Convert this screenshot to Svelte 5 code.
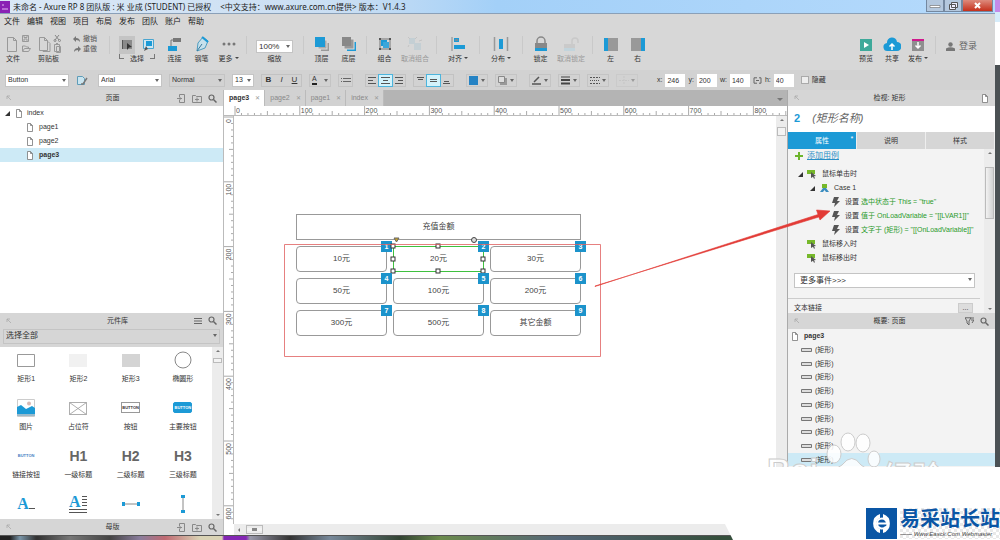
<script>
  const menus = ['文件', '编辑', '视图', '项目', '布局', '发布', '团队', '账户', '帮助']

  // one entry per tool, 'sep' draws the thin divider
  const tools = [
    { icon: 'front', label: '顶层' },
    { icon: 'back', label: '底层' },
    'sep',
    { icon: 'group', label: '组合' },
    { icon: 'ungroup', label: '取消组合', off: true },
    'sep',
    { icon: 'align', label: '对齐', wide: true, more: true },
    'sep',
    { icon: 'distribute', label: '分布', wide: true, more: true },
    'sep',
    { icon: 'lock', label: '锁定' },
    { icon: 'unlock', label: '取消锁定', off: true },
    'sep',
    { icon: 'left', label: '左' },
    { icon: 'right', label: '右' }
  ]

  const publishTools = [
    { icon: 'preview', label: '预览' },
    { icon: 'share', label: '共享' },
    { icon: 'publish', label: '发布', more: true }
  ]

  let openTabs = ['page3', 'page2', 'page1', 'index']
  let currentPage = 'page3'

  const widgets = [
    ['rect1', '矩形1'], ['rect2', '矩形2'], ['rect3', '矩形3'], ['ellipse', '椭圆形'],
    ['image', '图片'], ['placeholder', '占位符'], ['button', '按钮'], ['primary', '主要按钮'],
    ['linkbutton', '链接按钮'], ['H1', '一级标题'], ['H2', '二级标题'], ['H3', '三级标题'],
    ['label', ''], ['paragraph', ''], ['hline', ''], ['vline', '']
  ]

  const amounts = ['10元', '20元', '30元', '50元', '100元', '200元', '300元', '500元', '其它金额']
  const selected = 1

  const shapes = amounts.map((text, i) => {
    return { text, num: i + 1, x: 62 + (i % 3) * 97, y: 130 + Math.floor(i / 3) * 32 }
  })

  const handles = [[0, 0], [45, 0], [90, 0], [0, 13], [90, 13], [0, 25], [45, 25], [90, 25]]

  const actions = [
    ['选中状态于', 'This = "true"'],
    ['值于', 'OnLoadVariable = "[[LVAR1]]"'],
    ['文字于', '(矩形) = "[[OnLoadVariable]]"']
  ]

  const outline = Array(10).fill('(矩形)')
  const outlineSelected = 8

  // ruler ticks, every 10 units of the canvas
  const unit = 6.48
  const hticks = Array.from({ length: 86 }, (_, i) => i)
  const vticks = Array.from({ length: 63 }, (_, i) => i)

  let zoom = '100%'
  let hidden = false
  let dims = { x: '246', y: '200', w: '140', h: '40' }
</script>

{#snippet toolIcon(name)}
  <svg class="tool-icon" width="18" height="16" viewBox="0 0 18 16">
    {#if name === 'front'}
      <rect x="8" y="7" width="8" height="8" fill="#999" />
      <rect x="5" y="4" width="9" height="9" fill="#aaa" stroke="#ddd" />
      <rect x="2" y="1" width="10" height="10" fill="#1c9ad6" />
    {:else if name === 'back'}
      <rect x="7" y="6" width="9" height="9" fill="#1c9ad6" />
      <rect x="4" y="3" width="10" height="10" fill="#999" stroke="#ddd" />
      <rect x="2" y="1" width="9" height="9" fill="#888" />
    {:else if name === 'group'}
      <rect x="4" y="3" width="10" height="10" fill="none" stroke="#777" />
      <rect x="5" y="4" width="6" height="6" fill="#1c9ad6" />
      <rect x="7" y="6" width="6" height="6" fill="#3ba6da" />
      <path d="M3 2h2v2H3zM13 2h2v2h-2zM3 12h2v2H3zM13 12h2v2h-2z" fill="#555" />
    {:else if name === 'ungroup'}
      <path d="M3 2h6v6H3zM8 7h7v7H8z" fill="#c4cfd4" />
      <path d="M2 1l2 2M9 3l2-2M3 9l-1 2M13 5l3-1" stroke="#c4c4c4" />
    {:else if name === 'align'}
      <path d="M3 1v14" stroke="#888" />
      <path d="M5 2h5v4H5zM5 9h11v4H5z" fill="#1c9ad6" />
      <path d="M6 3h3v2H6z" fill="#6c8ea0" />
    {:else if name === 'distribute'}
      <path d="M2.500 1v14M15.500 1v14" stroke="#999" stroke-width="1.500" />
      <path d="M7 3h4v10H7z" fill="#1c9ad6" />
    {:else if name === 'lock'}
      <path d="M5 8V5a4 4 0 0 1 8 0v3" fill="none" stroke="#888" stroke-width="1.500" />
      <path d="M3 7h12v5H3z" fill="#888" />
      <path d="M3 12h12v3H3z" fill="#1c9ad6" />
    {:else if name === 'unlock'}
      <path d="M10 8V5a3 3 0 0 1 6 0v2" fill="none" stroke="#c9c9c9" stroke-width="1.500" />
      <path d="M2 8h11v4H2z" fill="#cacaca" />
      <path d="M2 12h11v3H2z" fill="#c2d4dc" />
    {:else if name === 'left'}
      <path d="M6 2h10v13H6z" fill="#999" />
      <path d="M2 2h4v13H2z" fill="#1c9ad6" />
    {:else if name === 'right'}
      <path d="M2 2h10v13H2z" fill="#999" />
      <path d="M12 2h4v13h-4z" fill="#1c9ad6" />
    {:else if name === 'connect'}
      <path d="M7 2h8v4H7z" fill="#777" />
      <path d="M5 10V4h3" fill="none" stroke="#777" />
      <path d="M2 10h9v5H2z" fill="#1c9ad6" />
    {:else if name === 'pen'}
      <path d="M10 1l5 4-3 7-8 3 1-8z" fill="#c7e1ec" stroke="#4d9cc0" />
      <path d="M4 15l5-7" stroke="#39789a" />
      <path d="M9 1l6 5" stroke="#1c9ad6" stroke-width="2" />
    {:else if name === 'more'}
      <circle cx="4" cy="8" r="1.500" fill="#777" /><circle cx="9" cy="8" r="1.500" fill="#777" /><circle cx="14" cy="8" r="1.500" fill="#777" />
    {:else if name === 'preview'}
      <path d="M3 3h12v12H3z" fill="#3ea99a" />
      <path d="M7 6l5 3-5 3z" fill="#fff" />
    {:else if name === 'share'}
      <path d="M5 15a4 4 0 0 1-1-8 5 5 0 0 1 10-1 4.500 4.500 0 0 1 0 9z" fill="#1c9ad6" />
      <path d="M9 14V9M6.500 10.500L9 8l2.500 2.500" fill="none" stroke="#fff" stroke-width="1.500" />
    {:else if name === 'publish'}
      <path d="M3 5h12v10H3z" fill="#8f8f8f" />
      <path d="M3 3h12v2H3z" fill="#d0188c" />
      <path d="M9 6v5M6.500 9.500L9 12l2.500-2.500" fill="none" stroke="#fff" stroke-width="1.500" />
    {/if}
  </svg>
{/snippet}

{#snippet tool(t)}
  <button class="tool" class:off={t.off} class:wide={t.wide || t.off}>
    {@render toolIcon(t.icon)}
    <span>{t.label}{#if t.more}<i class="caret"></i>{/if}</span>
  </button>
{/snippet}

{#snippet doc()}
  <svg class="doc" width="8" height="9" viewBox="0 0 8 9"><path d="M1.500.5h3l2 2v6h-5zM4.500.5v2h2" fill="#fff" stroke="#777" stroke-width=".8" /></svg>
{/snippet}

{#snippet magnifier()}
  <svg width="9" height="9" viewBox="0 0 9 9"><circle cx="3.500" cy="3.500" r="2.500" fill="none" stroke="#666" stroke-width="1.200" /><path d="M5.500 5.500L8.500 8.500" stroke="#666" stroke-width="1.500" /></svg>
{/snippet}

{#snippet addIcons()}
  <svg width="9" height="9" viewBox="0 0 9 9"><path d="M2.500 3V.5h5v8h-5V6M0 4.500h5M3 3v3" fill="none" stroke="#888" /></svg>
  <svg width="10" height="9" viewBox="0 0 10 9"><path d="M.5 8.500v-7h3l1 1h5v6zM3 5.500h4M5 3.500v4" fill="none" stroke="#888" /></svg>
{/snippet}

{#snippet pin()}
  <svg class="pin" width="6" height="6" viewBox="0 0 6 6"><path d="M1 4V1h3M1 1l4 4" fill="none" stroke="#aaa" stroke-width=".8" /></svg>
{/snippet}

{#snippet eventIcon()}
  <svg class="event-icon" width="10" height="9" viewBox="0 0 10 9"><path d="M0 0h8v4H0z" fill="#76b82a" /><path d="M4 2l5 4-2 .3 1 2-1 .5-1-2-2 1.200z" fill="#555" /></svg>
{/snippet}

<svelte:head><title>Axure RP 8</title></svelte:head>

<div class="desktop">
  <div class="window">
    <header class="titlebar">
      <svg width="10" height="12" viewBox="0 0 10 12"><path d="M0 0h10v12H0z" fill="#8a22b4" /><path d="M2 8h6M2 4h2" stroke="#e5b9f5" /></svg>
      <span>未命名 - Axure RP 8 团队版 : 米 业成 (STUDENT) 已授权</span>
      <span class="support">&lt;中文支持：www.axure.com.cn提供&gt; 版本：V1.4.3</span>
      <div class="controls">
        <button aria-label="最小化"><svg width="12" height="6" viewBox="0 0 12 6"><path d="M1 2.500h10v2H1z" fill="#fff" stroke="#666" stroke-width=".6" /></svg></button>
        <button aria-label="还原"><svg width="9" height="8" viewBox="0 0 9 8"><path d="M2.500.5h6v5h-6zM.5 2.500h6v5h-6z" fill="#eef" stroke="#555" /></svg></button>
        <button class="close" aria-label="关闭"><svg width="7" height="7" viewBox="0 0 7 7"><path d="M1 1l5 5M6 1L1 6" stroke="#fff" stroke-width="2" /></svg></button>
      </div>
    </header>

    <nav class="menubar">
      {#each menus as m}
        <button>{m}</button>
      {/each}
    </nav>

    <div class="toolbar">
      <div class="filegroup">
        <div class="icons">
          <svg width="25" height="20" viewBox="0 0 25 20">
            <path d="M1.500 3.500h6l3 3v11h-9zM7.500 3.500v3h3" fill="none" stroke="#999" />
            <path d="M16.500 1.500h6v6h-6zM18 1.500v2h3v-2M18 7V5h3v2" fill="none" stroke="#999" />
            <path d="M16.500 17v-5h3l1 1h2v2M16.500 17.500l2-3h6l-2 3z" fill="none" stroke="#999" />
          </svg>
        </div>
        <span>文件</span>
      </div>
      <div class="filegroup">
        <div class="icons">
          <svg width="25" height="20" viewBox="0 0 25 20">
            <path d="M1.500 3.500h5l3 3v10h-8zM6.500 3.500v3h3M5 16.500v1h7v-8l-2-2" fill="none" stroke="#999" />
            <path d="M17 1l4 5M21 1l-4 5" stroke="#888" /><circle cx="17" cy="6.500" r="1" fill="none" stroke="#888" /><circle cx="21.500" cy="6.500" r="1" fill="none" stroke="#888" />
            <path d="M16.500 10.500h5v7h-5zM18 9.500h2M18.500 12.500h4v6h-4z" fill="none" stroke="#999" />
          </svg>
        </div>
        <span>剪贴板</span>
      </div>
      <div class="undo">
        <button><svg width="8" height="7" viewBox="0 0 8 7"><path d="M0 3l3-3v2q4 0 4 4-1-2-4-2v2z" fill="#777" /></svg>撤销</button>
        <button><svg width="8" height="7" viewBox="0 0 8 7"><path d="M8 3L5 0v2Q1 2 1 6q1-2 4-2v2z" fill="#777" /></svg>重做</button>
      </div>
      <i class="sep"></i>
      <div class="selectmode">
        <div class="modes">
          <button class="on" aria-label="相交选中"><svg width="16" height="16" viewBox="0 0 16 16"><path d="M3 3h10v9H3z" fill="#8a8a8a" /><path d="M8 6l5 4-3 .5L8 13z" fill="#333" /><path d="M3.500 3v9" stroke="#555" /></svg></button>
          <button aria-label="包含选中"><svg width="14" height="16" viewBox="0 0 14 16"><path d="M2.500 2.500h10v9h-10z" fill="#cfe6f1" stroke="#4aa5cf" /><path d="M5 4h6v5H5z" fill="#1c9ad6" /><path d="M3 14l2-5 2 3z" fill="#555" /></svg></button>
        </div>
        <span class="bracket"><i></i>选择<i></i></span>
      </div>
      {@render tool({ icon: 'connect', label: '连接' })}
      {@render tool({ icon: 'pen', label: '钢笔' })}
      {@render tool({ icon: 'more', label: '更多', more: true })}
      <i class="sep"></i>
      <div class="zoom">
        <div class="combo"><select id="zoom" bind:value={zoom}><option>100%</option><option>200%</option></select></div>
        <label for="zoom">缩放</label>
      </div>
      <i class="sep"></i>
      {#each tools as t}
        {#if t === 'sep'}
          <i class="sep"></i>
        {:else}
          {@render tool(t)}
        {/if}
      {/each}
      <div class="account">
        {#each publishTools as t}
          {@render tool(t)}
        {/each}
        <i class="sep"></i>
        <button class="login"><svg width="9" height="9" viewBox="0 0 9 9"><circle cx="4.500" cy="2.500" r="2.200" fill="#777" /><path d="M0 9V6.500Q4.500 4 9 6.500V9z" fill="#777" /></svg>登录</button>
      </div>
    </div>

    <div class="formatbar">
      <div class="combo style"><select aria-label="样式"><option>Button</option></select></div>
      <button class="flat" aria-label="样式管理"><svg width="12" height="11" viewBox="0 0 12 11"><path d="M1.500 1.500h5l2 2v6h-7z" fill="#c9e4ef" stroke="#5e9cb8" /><path d="M11 3L7 9H5" fill="none" stroke="#777" stroke-width="1.500" /></svg></button>
      <div class="combo style font"><select aria-label="字体"><option>Arial</option></select></div>
      <div class="combo weight"><select aria-label="字型"><option>Normal</option></select></div>
      <div class="combo size"><select aria-label="字号"><option>13</option></select></div>
      <div class="set"><button><b>B</b></button><button><em>I</em></button><button><u>U</u></button></div>
      <button class="drop" aria-label="文字颜色"><span class="letter">A</span></button>
      <button class="box" aria-label="项目符号"><svg width="10" height="8" viewBox="0 0 10 8"><path d="M2 2.500h8M2 5.500h8M0 2.500h1M0 5.500h1" stroke="#666" /></svg></button>
      <div class="set gap">
        <button aria-label="左对齐"><svg width="9" height="9" viewBox="0 0 9 9"><path d="M0 1.500h8M0 4.500h5M0 7.500h8" stroke="#555" /></svg></button>
        <button class="on" aria-label="居中"><svg width="9" height="9" viewBox="0 0 9 9"><path d="M0 1.500h9M2 4.500h5M0 7.500h9" stroke="#555" /></svg></button>
        <button aria-label="右对齐"><svg width="9" height="9" viewBox="0 0 9 9"><path d="M1 1.500h8M4 4.500h5M1 7.500h8" stroke="#555" /></svg></button>
      </div>
      <div class="set">
        <button aria-label="顶部"><svg width="9" height="9" viewBox="0 0 9 9"><path d="M1 1.500h7M2 3.500h5" stroke="#555" /></svg></button>
        <button class="on" aria-label="中部"><svg width="9" height="9" viewBox="0 0 9 9"><path d="M1 3.500h7M1 5.500h7" stroke="#555" /></svg></button>
        <button aria-label="底部"><svg width="9" height="9" viewBox="0 0 9 9"><path d="M2 5.500h5M1 7.500h7" stroke="#555" /></svg></button>
      </div>
      <button class="drop gap" aria-label="填充颜色"><svg width="9" height="9"><path d="M0 0h9v9H0z" fill="#2583c4" /></svg></button>
      <button class="drop" aria-label="外部阴影"><svg width="9" height="9"><path d="M2 2h7v7H2z" fill="#999" /><path d="M.5.5h6v6h-6z" fill="#ddd" stroke="#888" /></svg></button>
      <button class="drop gap" aria-label="线段颜色"><svg width="9" height="9"><path d="M2 6l5-5M0 8h9" stroke="#555" stroke-width="1.500" /></svg></button>
      <button class="drop" aria-label="线宽"><svg width="9" height="9"><path d="M0 1h9" stroke="#444" /><path d="M0 4h9M0 7.500h9" stroke="#444" stroke-width="2" /></svg></button>
      <button class="drop" aria-label="线段类型"><svg width="10" height="9"><path d="M0 1.500h10M0 7.500h10" stroke="#555" stroke-dasharray="2 1" /><path d="M0 4.500h10" stroke="#555" stroke-dasharray="1 1" /></svg></button>
      <button class="drop faded" aria-label="箭头样式"><svg width="10" height="9"><path d="M0 4.500h10M5 0v9" stroke="#bbb" stroke-dasharray="2 1" /></svg></button>
      <div class="dims">
        <label for="dim-x">x:</label><input id="dim-x" bind:value={dims.x} />
        <label for="dim-y">y:</label><input id="dim-y" bind:value={dims.y} />
        <label for="dim-w">w:</label><input id="dim-w" bind:value={dims.w} />
        <svg width="9" height="7" viewBox="0 0 9 7"><path d="M4 .8H1v5.400h3M6 .8h2v5.400H6M3 3.500h3" fill="none" stroke="#666" /></svg>
        <label for="dim-h">h:</label><input id="dim-h" bind:value={dims.h} />
      </div>
      <label class="hide"><input type="checkbox" bind:checked={hidden} />隐藏</label>
    </div>

    <main>
      <aside class="left">
        <div class="head">{@render pin()}<h2>页面</h2><div class="head-icons">{@render addIcons()}{@render magnifier()}</div></div>
        <ul class="pages">
          <li class="root"><i class="tri"></i>{@render doc()}index</li>
          {#each ['page1', 'page2', 'page3'] as p}
            <li class:current={p === currentPage}>{@render doc()}{p}</li>
          {/each}
        </ul>
        <div class="head library-head">{@render pin()}<h2>元件库</h2><div class="head-icons"><svg width="8" height="8" viewBox="0 0 8 8"><path d="M0 1.500h8M0 4h8M0 6.500h8" stroke="#666" /></svg>{@render magnifier()}</div></div>
        <div class="library-pick"><div class="combo"><select aria-label="元件库"><option>选择全部</option></select></div></div>
        <div class="library">
          <div class="widgets">
            {#each widgets as [kind, label]}
              <div class="widget">
                <div class="pic">
                  {#if kind[0] === 'H'}
                    <strong>{kind}</strong>
                  {:else if kind === 'button' || kind === 'primary' || kind === 'linkbutton'}
                    <span class={kind}>BUTTON</span>
                  {:else if kind === 'label'}
                    <span class="serif">A</span><svg width="6" height="16"><path d="M0 12.500h6" stroke="#555" /></svg>
                  {:else}
                    <svg width="20" height="20" viewBox="0 0 20 20">
                      {#if kind === 'rect1'}<path d="M1.500 4.500h17v12h-17z" fill="#fff" stroke="#999" />
                      {:else if kind === 'rect2'}<path d="M1 4h18v13H1z" fill="#f1f1f1" />
                      {:else if kind === 'rect3'}<path d="M1 4h18v13H1z" fill="#d4d4d4" />
                      {:else if kind === 'ellipse'}<circle cx="10" cy="10" r="8" fill="#fff" stroke="#888" />
                      {:else if kind === 'image'}<path d="M1.500 1.500h17v17h-17z" fill="#fff" stroke="#ccc" /><circle cx="13" cy="5.500" r="2" fill="#d9b9b4" /><path d="M1 9l4-2 5 4 6-3 3 2v6H1z" fill="#1c9ad6" /><path d="M1 16h18v2H1z" fill="#9bc" />
                      {:else if kind === 'placeholder'}<path d="M1.500 4.500h17v12h-17zM1.500 4.500l17 12M18.500 4.500l-17 12" fill="none" stroke="#999" stroke-width=".8" />
                      {:else if kind === 'paragraph'}<text x="1" y="13" class="para">A</text><path d="M14 2.500h5M14 5.500h5M14 8.500h5M14 11.500h5M1 15.500h18M1 18.500h18" stroke="#555" />
                      {:else if kind === 'hline'}<path d="M2 10h16" stroke="#888" /><path d="M1 8h3v4H1zM16 8h3v4h-3z" fill="#1c9ad6" />
                      {:else if kind === 'vline'}<path d="M10 2v16" stroke="#888" /><path d="M8 1h4v3H8zM8 16h4v3H8z" fill="#1c9ad6" />
                      {/if}
                    </svg>
                  {/if}
                </div>
                <span>{label}</span>
              </div>
            {/each}
          </div>
          <div class="vscroll"><i class="up"></i><b class="short"></b><i class="down"></i></div>
        </div>
        <div class="head">{@render pin()}<h2>母版</h2><div class="head-icons">{@render addIcons()}{@render magnifier()}</div></div>
      </aside>

      <section class="center">
        <div class="tabs">
          {#each openTabs as t}
            <button class="tab" class:active={t === currentPage} on:click={() => (currentPage = t)}>{t}<span>✕</span></button>
          {/each}
          <i class="tabmenu"></i>
        </div>
        <svg class="hruler">
          {#each hticks as i}
            <path d="M{11 + i * unit} {i % 10 === 0 ? 0 : i % 5 === 0 ? 5 : 7}V10" />
            {#if i % 10 === 0}<text x={12 + i * unit} y="7">{i * 10}</text>{/if}
          {/each}
        </svg>
        <div class="workrow">
          <svg class="vruler">
            {#each vticks as i}
              <path d="M{i % 10 === 0 ? 0 : i % 5 === 0 ? 5 : 7} {1 + i * unit}H10" />
              {#if i % 10 === 0}<text text-anchor="end" transform="translate(7 {3 + i * unit}) rotate(-90)">{i * 10}</text>{/if}
            {/each}
          </svg>
          <div class="canvas">
            <div class="shape banner">充值金额</div>
            {#each shapes as s, i}
              <div class="shape amount" class:picked={i === selected} style="left: {s.x}px; top: {s.y}px">
                {s.text}
                {#if i === selected}
                  <svg class="handles" width="99" height="42" viewBox="-4 -12 99 42">
                    <path d="M1-8h5L3.500-4z" fill="#c9a227" stroke="#666" />
                    <circle cx="81" cy="-6" r="2.500" fill="#ddd" stroke="#444" />
                    {#each handles as [hx, hy]}
                      <rect x={hx - 2} y={hy - 2} width="4" height="4" />
                    {/each}
                  </svg>
                {/if}
                <span class="num">{s.num}</span>
              </div>
            {/each}
          </div>
          <div class="vscroll"><i class="up"></i><b></b></div>
        </div>
        <div class="hscroll"><i></i><b></b></div>
      </section>

      <aside class="right">
        <div class="head">{@render pin()}<h2>检视: 矩形</h2><div class="head-icons">{@render doc()}</div></div>
        <div class="name"><b>2</b><em>(矩形名称)</em></div>
        <div class="inspect-tabs"><button class="on">属性<i>*</i></button><button>说明</button><button>样式</button></div>
        <div class="events">
          <div class="event-body">
            <div class="addcase"><svg width="8" height="8"><path d="M4 0v8M0 4h8" stroke="#6db52c" stroke-width="2" /></svg><a href="#case">添加用例</a></div>
            <ul>
              <li><i class="tri"></i>{@render eventIcon()}鼠标单击时</li>
              <li class="case"><i class="tri"></i><svg width="9" height="9" viewBox="0 0 9 9"><path d="M2 0h5v4H2z" fill="#76b82a" /><path d="M0 8l3-4 3 0 3 4H6L4.500 6 3 8z" fill="#3b8dc0" /></svg>Case 1</li>
              {#each actions as [verb, rest]}
                <li class="action"><svg width="8" height="10" viewBox="0 0 8 10"><path d="M2 0h5L5 4h3L2 10l1-4H0z" fill="#555" /></svg><span>设置</span> <span class="green">{verb} {rest}</span></li>
              {/each}
              <li class="leaf">{@render eventIcon()}鼠标移入时</li>
              <li class="leaf">{@render eventIcon()}鼠标移出时</li>
            </ul>
            <div class="combo moreevents"><select aria-label="更多事件"><option>更多事件&gt;&gt;&gt;</option></select></div>
            <div class="textlink"><span>文本链接</span><button aria-label="编辑文本链接">...</button></div>
          </div>
          <div class="vscroll"><i class="up"></i><b class="long"></b><i class="down"></i></div>
        </div>
        <div class="head">{@render pin()}<h2>概要: 页面</h2><div class="head-icons"><svg width="9" height="8" viewBox="0 0 9 8"><path d="M0 .8h6L4 4v4L2 6V4zM6 1h3M6 3h3L7 6" fill="none" stroke="#666" /></svg>{@render magnifier()}</div></div>
        <ul class="outline">
          <li class="top">{@render doc()}page3</li>
          {#each outline as o, i}
            <li class:current={i === outlineSelected}><svg width="11" height="4" viewBox="0 0 11 4"><path d="M.5.5h10v3H.5z" fill="#ddd" stroke="#777" /></svg>{o}</li>
          {/each}
        </ul>
      </aside>
    </main>
    <footer class="taskbar"></footer>
  </div>
  <div class="edge"></div>

  <!-- marks laid over the window -->
  <svg class="marks" width="1000" height="540" viewBox="0 0 1000 540">
    <path d="M284.500 244.500h316v112h-316z" fill="none" stroke="#e06060" stroke-width=".8" />
    <path d="M595 286.500L818 214.500 816.500 210 830 211 820 220 818.800 217 595 286z" fill="#e23b36" stroke="#e23b36" stroke-width=".6" />
    <g class="paw">
      <text x="767" y="482" font-size="33">Bai</text>
      <text x="883" y="487" font-size="30">经验</text>
      <ellipse cx="834" cy="454" rx="7" ry="9" /><ellipse cx="848" cy="442" rx="7" ry="9" /><ellipse cx="863" cy="443" rx="7" ry="9" /><ellipse cx="874" cy="459" rx="6" ry="8" />
      <path d="M830 478q4-9 12-13 10-13 19 0 9 5 11 13z" />
    </g>
    <path d="M733 540l-8-16V467h275v73z" fill="#fff" />
  </svg>

  <div class="brand">
    <svg width="31" height="31" viewBox="0 0 31 31">
      <path d="M0 0h31v31H0z" fill="#0a56a5" />
      <path d="M14 6a10 10 0 0 0 0 19v-4a6 6 0 0 1 0-11zM17 6a10 10 0 0 1 0 19v-4a6 6 0 0 0 0-11z" fill="#fff" />
      <path d="M10 15.500h11a5 5 0 0 0-10 0 5 5 0 0 0 9 3" fill="none" stroke="#fff" stroke-width="2" />
    </svg>
    <div><strong>易采站长站</strong><small>—— Www.Easck.Com Webmaster</small></div>
  </div>
</div>

<style>
  :global(body) {
    background: #fff;
  }

  .desktop {
    position: relative;
    display: flex;
    height: 100vh;
    overflow: hidden;
    font: 7px/10px "Liberation Sans", "Noto Sans CJK SC", sans-serif;
    color: #333;
  }

  .desktop * {
    box-sizing: border-box;
  }

  button, select, input {
    font: inherit;
    color: inherit;
    margin: 0;
    padding: 0;
    border: 0;
    background: none;
    border-radius: 0;
  }

  ul {
    list-style: none;
    margin: 0;
    padding: 0;
  }

  svg {
    flex: none;
    display: block;
  }

  .window {
    flex: 1;
    min-width: 0;
    display: flex;
    flex-direction: column;
    background: #d7d7d7;
  }

  .edge {
    width: 5px;
    background: linear-gradient(#c48ae8 0 12px, #d6ecfa 12px 22px, #fff 22px 65px, #4b5154 65px);
  }

  .titlebar {
    display: flex;
    align-items: center;
    height: 14px;
    flex: none;
    gap: 3px;
    font-family: "Noto Sans", "Noto Sans CJK SC", sans-serif;
    font-size: 8px;
    color: #222;
    white-space: nowrap;
    background: linear-gradient(90deg, #dbe8f6, #c9def3 35%, #a3d0f8 50%, #b5dafc);
    border-bottom: 1px solid #8aa0b8;
  }

  .support {
    margin-left: 6px;
  }

  .controls {
    margin-left: auto;
    align-self: flex-start;
    display: flex;
    height: 12px;
  }

  .controls button {
    display: grid;
    place-items: center;
    width: 18px;
    background: #b4c8de;
    border: 1px solid #7488a0;
    border-top: 0;
  }

  .controls .close {
    width: 31px;
    margin-right: 2px;
    background: linear-gradient(#dd8a7c, #c5301c);
  }

  .menubar {
    display: flex;
    flex: none;
    height: 15px;
    padding-left: 4px;
    gap: 7px;
    font-size: 8px;
    color: #222;
  }

  .toolbar {
    display: flex;
    flex: none;
    height: 41px;
    padding: 5px 0 0 6px;
  }

  .filegroup {
    width: 32px;
  }

  .filegroup .icons {
    height: 20px;
  }

  .undo {
    display: flex;
    flex-direction: column;
    width: 32px;
    margin-left: 3px;
  }

  .undo button {
    display: flex;
    align-items: center;
    gap: 2px;
    color: #555;
  }

  .sep {
    flex: none;
    width: 1px;
    height: 18px;
    margin: 2px 4px;
    background: #c9c9c9;
  }

  .selectmode {
    width: 42px;
    margin: 0 0 0 5px;
  }

  .modes {
    display: flex;
    gap: 6px;
    height: 20px;
    padding-top: 2px;
  }

  .modes .on {
    background: #c4c4c4;
  }

  .bracket {
    display: flex;
    justify-content: space-between;
    width: 36px;
  }

  .bracket i {
    width: 5px;
    height: 5px;
    border: solid #777;
    border-width: 0 0 1px 1px;
  }

  .bracket i:last-child {
    border-width: 0 1px 1px 0;
  }

  .tool {
    display: flex;
    flex: none;
    flex-direction: column;
    align-items: center;
    width: 27px;
    height: 30px;
    padding-top: 2px;
    white-space: nowrap;
  }

  .tool span {
    margin-top: 2px;
  }

  .tool.wide {
    width: 34px;
  }

  .tool.off {
    color: #999;
  }

  .caret {
    display: inline-block;
    margin: 0 0 2px 2px;
    border: 2px solid transparent;
    border-top-color: #444;
    border-bottom: 0;
  }

  .zoom {
    width: 48px;
    padding: 6px 6px 0 5px;
    text-align: center;
  }

  .zoom .combo {
    font-size: 8px;
    margin-bottom: 1px;
  }

  .zoom label {
    display: block;
  }

  .combo {
    position: relative;
    height: 13px;
    background: #fff;
  }

  .combo::after {
    content: "";
    position: absolute;
    right: 3px;
    top: 5px;
    border: 2px solid transparent;
    border-top: 3px solid #666;
    border-bottom: 0;
    pointer-events: none;
  }

  .combo select {
    appearance: none;
    width: 100%;
    height: 100%;
    padding-left: 2px;
    border: 1px solid #c4c4c4;
  }

  .account {
    display: flex;
    margin-left: auto;
    padding-right: 18px;
  }

  .account .tool {
    width: 26px;
  }

  .login {
    display: flex;
    align-items: center;
    gap: 4px;
    height: 24px;
    margin-left: 6px;
    font-size: 9px;
    color: #666;
  }

  .formatbar {
    display: flex;
    flex: none;
    align-items: center;
    height: 20px;
    padding: 0 5px 0 5px;
    gap: 7px;
    background: #d2d2d2;
  }

  .formatbar .style {
    width: 64px;
  }

  .formatbar .font {
    margin-left: 3px;
  }

  .formatbar .weight {
    width: 56px;
    background: #d2d2d2;
  }

  .formatbar .size {
    width: 22px;
  }

  .set {
    display: flex;
    height: 13px;
    border: 1px solid #c2c2c2;
  }

  .set button {
    display: grid;
    place-items: center;
    width: 13px;
    font-size: 8px;
  }

  .set button.on {
    background: #d3f2fb;
    outline: 1px solid #4db4dc;
  }

  .formatbar .gap {
    margin-left: 5px;
  }

  .drop, .box {
    display: flex;
    align-items: center;
    justify-content: space-between;
    width: 22px;
    height: 13px;
    padding: 0 2px;
    border: 1px solid #c4c4c4;
  }

  .box {
    width: 15px;
  }

  .drop::after {
    content: "";
    border: 2px solid transparent;
    border-top: 3px solid #666;
    border-bottom: 0;
  }

  .faded {
    opacity: .5;
  }

  .letter {
    line-height: 8px;
    border-bottom: 2px solid #222;
  }

  .dims {
    display: flex;
    align-items: center;
    gap: 3px;
    margin-left: 12px;
  }

  .dims input {
    width: 20px;
    height: 13px;
    padding-left: 2px;
    background: #fff;
  }

  .hide {
    display: flex;
    align-items: center;
    gap: 3px;
  }

  .hide input {
    appearance: none;
    width: 8px;
    height: 8px;
    background: #eee;
    border: 1px solid #aaa;
  }

  main {
    display: flex;
    flex: 1;
    min-height: 0;
  }

  .left, .center, .right {
    display: flex;
    flex-direction: column;
    min-height: 0;
    overflow: hidden;
  }

  .left {
    width: 223px;
    flex: none;
  }

  .center {
    flex: 1;
    min-width: 0;
    border-left: 1px solid #bbb;
    background: #fff;
  }

  .right {
    width: 208px;
    flex: none;
    border-left: 1px solid #aaa;
    background: #f3f3f3;
  }

  .head {
    display: flex;
    flex: none;
    align-items: center;
    height: 16px;
    padding: 0 6px;
    background: #d6d6d6;
  }

  h2 {
    flex: 1;
    margin: 0;
    font-size: 7px;
    font-weight: 400;
    text-align: center;
  }

  .left .pin {
    margin-right: 36px;
  }

  .right .pin {
    margin-right: 20px;
  }

  .head-icons {
    display: flex;
    justify-content: flex-end;
    align-items: center;
    gap: 6px;
    min-width: 30px;
  }

  .pages {
    flex: 6;
    background: #fff;
  }

  .pages li {
    display: flex;
    align-items: center;
    gap: 5px;
    height: 14px;
    padding-left: 26px;
  }

  .pages .root {
    padding-left: 5px;
    gap: 4px;
  }

  .tri {
    flex: none;
    width: 0;
    height: 0;
    border-left: 5px solid transparent;
    border-bottom: 5px solid #333;
  }

  .pages .root .doc {
    margin-left: 1px;
  }

  .current {
    background: #cdeaf6;
  }

  .pages .current {
    font-weight: 700;
  }

  .library-pick {
    flex: none;
    height: 18px;
    padding: 0 3px;
    background: #d6d6d6;
  }

  .library-pick .combo {
    height: 15px;
    font-size: 8px;
    background: #d6d6d6;
  }

  .library {
    display: flex;
    flex: 5;
    min-height: 0;
    overflow: hidden;
    background: #fff;
  }

  .widgets {
    flex: 1;
    display: grid;
    grid-template-columns: repeat(4, 1fr);
    grid-auto-rows: 48px;
    padding: 1px 3px 0 0;
  }

  .widget {
    text-align: center;
  }

  .pic {
    display: flex;
    justify-content: center;
    align-items: center;
    height: 24px;
    margin-bottom: 2px;
  }

  .pic strong {
    font-size: 14px;
    color: #666;
  }

  .button, .primary, .linkbutton {
    width: 19px;
    font-size: 4px;
    line-height: 9px;
    font-weight: 700;
    border: 1px solid #999;
  }

  .primary {
    color: #fff;
    background: #1c9ad6;
    border-color: #1c9ad6;
    border-radius: 2px;
  }

  .linkbutton {
    color: #4a7fc4;
    border: 0;
  }

  .serif, .para {
    font-family: "Liberation Serif", serif;
    font-size: 16px;
    font-weight: 700;
    color: #1c9ad6;
    fill: #1c9ad6;
  }

  .vscroll {
    display: flex;
    flex: none;
    flex-direction: column;
    align-items: center;
    width: 11px;
    padding: 3px 0;
    background: #ececec;
  }

  .vscroll i {
    border: 2px solid transparent;
  }

  .vscroll .up {
    border-top: 0;
    border-bottom-color: #777;
    margin-bottom: 6px;
  }

  .vscroll .down {
    margin-top: auto;
    border-bottom: 0;
    border-top-color: #777;
  }

  .vscroll b {
    width: 9px;
    height: 9px;
    background: #f3f3f3;
    border: 1px solid #bbb;
  }

  .vscroll .short {
    height: 5px;
  }

  .vscroll .long {
    height: 52px;
    margin-top: 7px;
    background: linear-gradient(90deg, #f2f2f2, #d2d2d2);
  }

  .tabs {
    display: flex;
    flex: none;
    height: 16px;
    background: #b4b4b4;
  }

  .tab {
    display: flex;
    align-items: center;
    gap: 6px;
    padding: 0 4px 0 5px;
    color: #888;
    background: #d2d2d2;
    border-right: 1px solid #bbb;
  }

  .tab span {
    font-size: 6px;
    font-weight: 400;
    color: #999;
  }

  .tab.active {
    font-weight: 700;
    color: #333;
    background: #fff;
  }

  .tabmenu {
    margin: 8px 4px 0 auto;
    height: 0;
    border: 3px solid transparent;
    border-top-color: #777;
    border-bottom: 0;
  }

  .hruler, .vruler {
    font-size: 7px;
    fill: #555;
    stroke: none;
    overflow: hidden;
  }

  .hruler {
    width: 100%;
    height: 10px;
    border-bottom: 1px solid #bbb;
  }

  .vruler {
    width: 10px;
    height: 100%;
    border-right: 1px solid #bbb;
  }

  .hruler path, .vruler path {
    stroke: #aaa;
    stroke-width: 1;
    fill: none;
  }

  .workrow {
    display: flex;
    flex: 1;
    min-height: 0;
  }

  .canvas {
    position: relative;
    flex: 1;
    overflow: hidden;
    font-size: 8px;
    color: #444;
  }

  .shape {
    position: absolute;
    display: grid;
    place-items: center;
    border: 1px solid #999;
    background: #fff;
  }

  .banner {
    left: 62px;
    top: 98px;
    width: 285px;
    height: 26px;
  }

  .amount {
    width: 91px;
    height: 26px;
    border-radius: 4px;
  }

  .picked {
    border-color: #3fc03f;
    border-radius: 0;
  }

  .num {
    position: absolute;
    right: -6px;
    top: -6px;
    width: 11px;
    height: 11px;
    font-size: 7px;
    font-weight: 700;
    line-height: 11px;
    text-align: center;
    color: #fff;
    background: #1c93cb;
  }

  .handles {
    position: absolute;
    left: -5px;
    top: -13px;
  }

  .handles rect {
    fill: #fff;
    stroke: #333;
  }

  .hscroll {
    display: flex;
    flex: none;
    align-items: center;
    height: 11px;
    margin-left: 10px;
    padding-left: 4px;
    gap: 6px;
    background: #ececec;
  }

  .hscroll i {
    border: 2px solid transparent;
    border-left: 0;
    border-right-color: #777;
  }

  .hscroll b {
    width: 17px;
    height: 9px;
    border: 1px solid #bbb;
    background: linear-gradient(90deg, #f3f3f3 5px, #888 5px 10px, #f3f3f3 10px);
    background-size: 100% 3px;
    background-position: 0 2px;
    background-repeat: no-repeat;
  }

  .name {
    display: flex;
    flex: none;
    align-items: center;
    gap: 12px;
    height: 26px;
    padding: 0 0 2px 6px;
    font-size: 11px;
    color: #666;
    background: #fff;
  }

  .name b {
    color: #1c9ad6;
  }

  .inspect-tabs {
    display: flex;
    flex: none;
    height: 17px;
  }

  .inspect-tabs button {
    flex: 1;
    background: #d6d6d6;
    border-right: 1px solid #eee;
  }

  .inspect-tabs .on {
    position: relative;
    color: #fff;
    background: #1c9ad6;
  }

  .inspect-tabs i {
    position: absolute;
    right: 3px;
    top: 2px;
  }

  .events {
    display: flex;
    flex: 4;
    min-height: 0;
    overflow: hidden;
  }

  .event-body {
    flex: 1;
    white-space: nowrap;
  }

  .addcase {
    display: flex;
    align-items: center;
    gap: 4px;
    height: 18px;
    padding: 0 0 4px 7px;
    font-size: 8px;
  }

  .addcase a {
    color: #2a8fc7;
  }

  .event-body li {
    display: flex;
    align-items: center;
    height: 14px;
    padding-left: 10px;
    gap: 4px;
  }

  .event-icon {
    margin-right: 1px;
  }

  .event-body .case {
    padding-left: 22px;
    gap: 5px;
  }

  .event-body .action {
    padding-left: 44px;
    gap: 2px;
  }

  .action svg {
    margin-right: 3px;
  }

  .event-body .leaf {
    padding-left: 19px;
  }

  .green {
    color: #2a9a2a;
  }

  .moreevents {
    height: 15px;
    margin: 8px 9px 10px 6px;
    font-size: 8px;
  }

  .moreevents select {
    padding-left: 5px;
  }

  .textlink {
    display: flex;
    justify-content: space-between;
    margin-right: 4px;
    padding: 4px 7px 0 6px;
    border-top: 1px solid #ccc;
  }

  .textlink button {
    width: 15px;
    height: 10px;
    line-height: 6px;
    background: #ddd;
    border: 1px solid #ccc;
  }

  .outline {
    display: flex;
    flex: 5;
    flex-direction: column;
    min-height: 0;
  }

  .outline::after {
    content: "";
    flex: 4;
  }

  .outline li {
    display: flex;
    flex: 1;
    align-items: center;
    gap: 3px;
    min-height: 0;
    padding-left: 13px;
  }

  .outline .top {
    padding-left: 3px;
    gap: 5px;
    font-weight: 700;
  }

  .taskbar {
    flex: none;
    height: 5px;
    background: linear-gradient(90deg, #222 0 10px, #7995a8 20px, #333 36px 38px, #777 70px, #444 110px, #8a7d9c 140px, #c06a72 165px, #d9d2b4 200px 222px, #8427b4 224px 246px, #99a 250px, #333 290px, #789 330px, #343 400px, #6b8a4c 440px, #567 560px, #354f3c 720px);
    border-top: 1px solid #555;
  }

  .marks {
    position: absolute;
    left: 0;
    top: 0;
    pointer-events: none;
  }

  .paw {
    font-weight: 700;
    fill: #fff;
    fill-opacity: .85;
    stroke: #ccc;
    stroke-width: 1;
  }

  .brand {
    position: absolute;
    right: 0;
    bottom: 1px;
    display: flex;
    gap: 3px;
    white-space: nowrap;
  }

  .brand div {
    display: flex;
    flex-direction: column;
    width: 100px;
    overflow: hidden;
    background: repeating-conic-gradient(#e9e9e9 0 25%, #fff 0 50%) 0 0 / 6px 6px;
  }

  .brand strong {
    font-size: 20px;
    line-height: 23px;
    color: #0a56a5;
  }

  .brand small {
    font-size: 6px;
    line-height: 7px;
    font-style: italic;
    color: #444;
  }
</style>
